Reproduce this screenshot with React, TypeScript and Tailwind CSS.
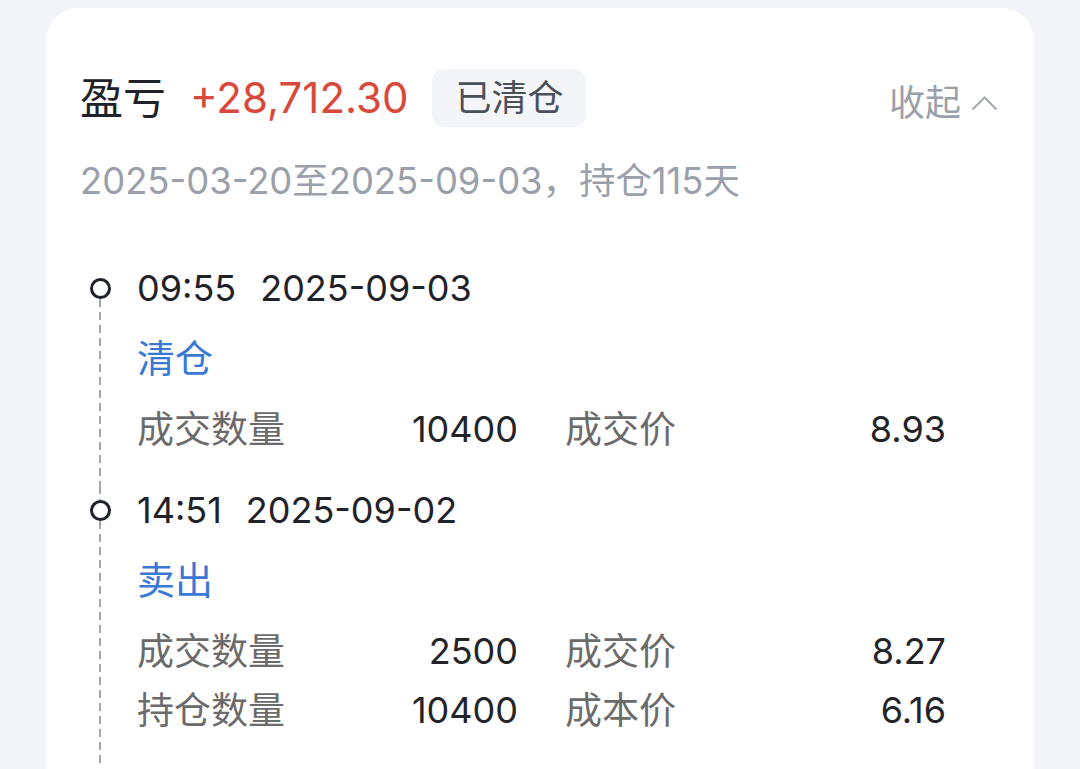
import React from 'react';

type Row = { label: string; value: string; label2: string; value2: string };

interface Trade {
    time: string;
    date: string;
    action: string;
    rows: Row[];
}

const trades: Trade[] = [
    {
        time: '09:55',
        date: '2025-09-03',
        action: '清仓',
        rows: [{ label: '成交数量', value: '10400', label2: '成交价', value2: '8.93' }],
    },
    {
        time: '14:51',
        date: '2025-09-02',
        action: '卖出',
        rows: [
            { label: '成交数量', value: '2500', label2: '成交价', value2: '8.27' },
            { label: '持仓数量', value: '10400', label2: '成本价', value2: '6.16' },
        ],
    },
];

const Dashes = ({ className = '' }: { className?: string }) => (
    <div
        className={`w-[2px] [background-image:repeating-linear-gradient(to_bottom,#a3a7ad_0_8px,transparent_8px_13px)] ${className}`}
    />
);

const TradeItem = ({ trade, first }: { trade: Trade; first: boolean }) => (
    <div className="flex">
        {/* timeline rail */}
        <div className="w-10 flex flex-col items-center shrink-0">
            {first ? <div className="h-[14px]" /> : <Dashes className="h-[14px]" />}
            <div className="w-[21px] h-[21px] rounded-full border-[3.5px] border-[#1f2329] bg-white shrink-0" />
            <Dashes className="flex-1" />
        </div>

        {/* content */}
        <div className="ml-[17px] pb-[27px]">
            <div className="h-12 flex items-center gap-[24px] text-[36px] text-[#1f2329]">
                <span>{trade.time}</span>
                <span>{trade.date}</span>
            </div>
            <div className="mt-[22px] h-12 flex items-center text-[38px] text-[#3a78d6]">{trade.action}</div>
            <div className="mt-[18px]">
                {trade.rows.map((r) => (
                    <div key={r.label} className="h-[59px] flex items-center gap-[47px] text-[37px]">
                        <div className="w-[381px] flex justify-between">
                            <span className="text-[#6b6b6b]">{r.label}</span>
                            <span className="text-[36px] text-[#222428]">{r.value}</span>
                        </div>
                        <div className="w-[381px] flex justify-between">
                            <span className="text-[#6b6b6b]">{r.label2}</span>
                            <span className="text-[36px] text-[#222428]">{r.value2}</span>
                        </div>
                    </div>
                ))}
            </div>
        </div>
    </div>
);

export default function App() {
    return (
        <div className="h-[769px] overflow-hidden bg-[#f3f4f8] pt-2 px-[46px] font-['Inter','Noto_Sans_CJK_SC',sans-serif] leading-none">
            <div className="bg-white rounded-[32px] min-h-[800px] pt-[61px] pl-[34px] pr-[34px]">
                {/* Header */}
                <div className="flex items-center justify-between">
                    <div className="flex items-center">
                        <span className="text-[43px] text-[#1f2329]">盈亏</span>
                        <span className="ml-[24px] text-[42px] text-[#d8493b]">+28,712.30</span>
                        <span className="ml-6 h-[58px] px-[23px] rounded-xl bg-[#f3f5f8] flex items-center text-[36px] text-[#4b5058]">
                            已清仓
                        </span>
                    </div>
                    <div className="flex items-center mt-[10px] text-[36px] text-[#9aa0aa]">
                        <span>收起</span>
                        <svg width="27" height="15" viewBox="0 0 27 15" className="ml-[10px] mr-[2px]">
                            <polyline points="1.5,13.5 13.5,1.5 25.5,13.5" fill="none" stroke="#a3a8b1" strokeWidth="2" />
                        </svg>
                    </div>
                </div>

                {/* Period */}
                <div className="mt-[29px] h-[50px] flex items-center text-[36.4px] text-[#9aa0aa]">
                    2025-03-20至2025-09-03，持仓115天
                </div>

                {/* Timeline */}
                <div className="mt-[58px]">
                    {trades.map((t, i) => (
                        <TradeItem key={t.date} trade={t} first={i === 0} />
                    ))}
                </div>
            </div>
        </div>
    );
}
